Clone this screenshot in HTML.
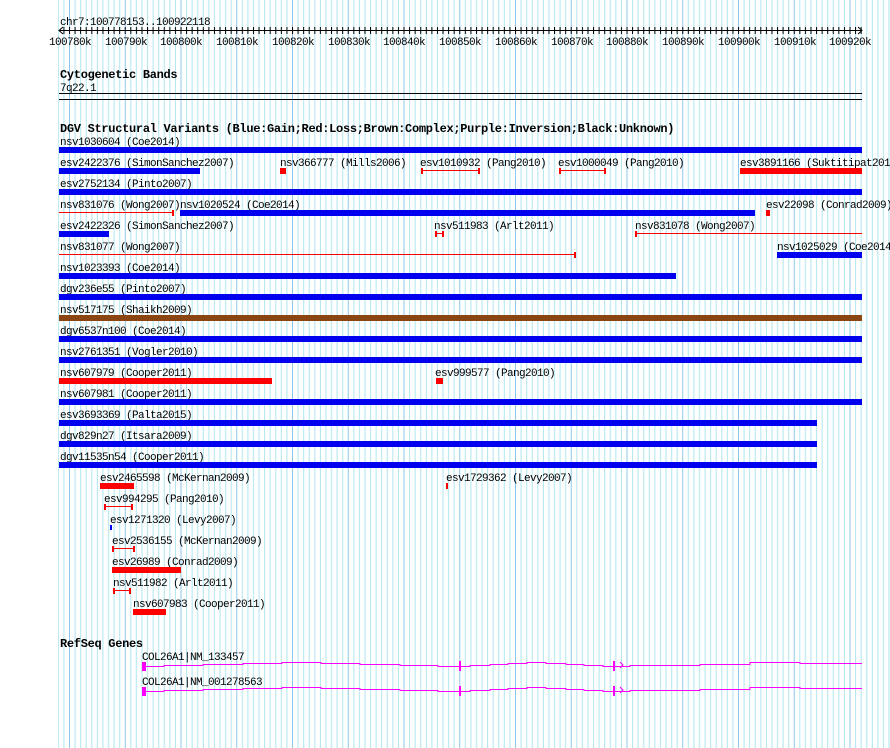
<!DOCTYPE html>
<html><head><meta charset="utf-8"><style>
html,body{margin:0;padding:0;background:#fff;width:890px;height:748px;overflow:hidden}
svg{display:block}
text{font-family:"Liberation Mono",monospace;font-size:11px;letter-spacing:-0.6px;fill:#000}
.b{font-weight:bold;font-size:12px;letter-spacing:-0.3px}
</style></head><body>
<svg width="890" height="748" xmlns="http://www.w3.org/2000/svg">
<defs>
<pattern id="g" patternUnits="userSpaceOnUse" x="69" y="0" width="55.75" height="748">
<rect x="0" y="0" width="1" height="748" fill="#8cc8ee"/>
<rect x="5.575" width="1" height="748" fill="#aee6ee"/>
<rect x="11.15" width="1" height="748" fill="#aee6ee"/>
<rect x="16.725" width="1" height="748" fill="#aee6ee"/>
<rect x="22.3" width="1" height="748" fill="#aee6ee"/>
<rect x="27.875" width="1" height="748" fill="#aee6ee"/>
<rect x="33.45" width="1" height="748" fill="#aee6ee"/>
<rect x="39.025" width="1" height="748" fill="#aee6ee"/>
<rect x="44.6" width="1" height="748" fill="#aee6ee"/>
<rect x="50.175" width="1" height="748" fill="#aee6ee"/>
</pattern>
<pattern id="t" patternUnits="userSpaceOnUse" x="69" y="0" width="5.575" height="40">
<rect x="0" y="27" width="1" height="7" fill="#000"/>
</pattern>
</defs>
<rect x="58" y="0" width="832" height="748" fill="url(#g)"/>

<text x="60" y="25">chr7:100778153..100922118</text>
<rect x="59" y="30" width="803" height="1" fill="#000"/>
<rect x="60" y="0" width="802" height="40" fill="url(#t)"/>
<path d="M63 27 L59 30.5 L63 34 M858 27 L862 30.5 L858 34" stroke="#000" fill="none"/>
<g text-anchor="middle">
<text x="70" y="45">100780k</text><text x="126" y="45">100790k</text><text x="181" y="45">100800k</text>
<text x="237" y="45">100810k</text><text x="293" y="45">100820k</text><text x="349" y="45">100830k</text>
<text x="404" y="45">100840k</text><text x="460" y="45">100850k</text><text x="516" y="45">100860k</text>
<text x="572" y="45">100870k</text><text x="627" y="45">100880k</text><text x="683" y="45">100890k</text>
<text x="739" y="45">100900k</text><text x="795" y="45">100910k</text><text x="850" y="45">100920k</text>
</g>

<text class="b" x="60" y="78">Cytogenetic Bands</text>
<text x="60" y="91">7q22.1</text>
<rect x="59" y="93" width="803" height="1" fill="#000"/>
<rect x="59" y="99" width="803" height="1" fill="#000"/>

<text class="b" x="60" y="132">DGV Structural Variants (Blue:Gain;Red:Loss;Brown:Complex;Purple:Inversion;Black:Unknown)</text>

<text x="60" y="145">nsv1030604 (Coe2014)</text>
<text x="60" y="166">esv2422376 (SimonSanchez2007)</text>
<text x="280" y="166">nsv366777 (Mills2006)</text>
<text x="420" y="166">esv1010932 (Pang2010)</text>
<text x="558" y="166">esv1000049 (Pang2010)</text>
<text x="740" y="166">esv3891166 (Suktitipat2011)</text>
<text x="60" y="187">esv2752134 (Pinto2007)</text>
<text x="60" y="208">nsv831076 (Wong2007)</text>
<text x="180" y="208">nsv1020524 (Coe2014)</text>
<text x="766" y="208">esv22098 (Conrad2009)</text>
<text x="60" y="229">esv2422326 (SimonSanchez2007)</text>
<text x="434" y="229">nsv511983 (Arlt2011)</text>
<text x="635" y="229">nsv831078 (Wong2007)</text>
<text x="60" y="250">nsv831077 (Wong2007)</text>
<text x="777" y="250">nsv1025029 (Coe2014)</text>
<text x="60" y="271">nsv1023393 (Coe2014)</text>
<text x="60" y="292">dgv236e55 (Pinto2007)</text>
<text x="60" y="313">nsv517175 (Shaikh2009)</text>
<text x="60" y="334">dgv6537n100 (Coe2014)</text>
<text x="60" y="355">nsv2761351 (Vogler2010)</text>
<text x="60" y="376">nsv607979 (Cooper2011)</text>
<text x="435" y="376">esv999577 (Pang2010)</text>
<text x="60" y="397">nsv607981 (Cooper2011)</text>
<text x="60" y="418">esv3693369 (Palta2015)</text>
<text x="60" y="439">dgv829n27 (Itsara2009)</text>
<text x="60" y="460">dgv11535n54 (Cooper2011)</text>
<text x="100" y="481">esv2465598 (McKernan2009)</text>
<text x="446" y="481">esv1729362 (Levy2007)</text>
<text x="104" y="502">esv994295 (Pang2010)</text>
<text x="110" y="523">esv1271320 (Levy2007)</text>
<text x="112" y="544">esv2536155 (McKernan2009)</text>
<text x="112" y="565">esv26989 (Conrad2009)</text>
<text x="113" y="586">nsv511982 (Arlt2011)</text>
<text x="133" y="607">nsv607983 (Cooper2011)</text>

<g fill="#0000ee">
<rect x="59" y="147" width="803" height="6"/>
<rect x="59" y="168" width="141" height="6"/>
<rect x="59" y="189" width="803" height="6"/>
<rect x="180" y="210" width="575" height="6"/>
<rect x="59" y="231" width="50" height="6"/>
<rect x="777" y="252" width="85" height="6"/>
<rect x="59" y="273" width="617" height="6"/>
<rect x="59" y="294" width="803" height="6"/>
<rect x="59" y="336" width="803" height="6"/>
<rect x="59" y="357" width="803" height="6"/>
<rect x="59" y="399" width="803" height="6"/>
<rect x="59" y="420" width="758" height="6"/>
<rect x="59" y="441" width="758" height="6"/>
<rect x="59" y="462" width="758" height="6"/>
<rect x="110" y="525" width="2" height="5"/>
</g>
<rect x="59" y="315" width="803" height="6" fill="#8b4513"/>
<g fill="#f00">
<rect x="280" y="168" width="6" height="6"/>
<rect x="740" y="168" width="122" height="6"/>
<rect x="766" y="210" width="4" height="6"/>
<rect x="59" y="378" width="213" height="6"/>
<rect x="436" y="378" width="7" height="6"/>
<rect x="100" y="483" width="34" height="6"/>
<rect x="446" y="483" width="2" height="6"/>
<rect x="112" y="567" width="69" height="6"/>
<rect x="133" y="609" width="33" height="6"/>
<rect x="421" y="170" width="58" height="1"/><rect x="421" y="168" width="2" height="6"/><rect x="478" y="168" width="2" height="6"/>
<rect x="559" y="170" width="46" height="1"/><rect x="559" y="168" width="2" height="6"/><rect x="604" y="168" width="2" height="6"/>
<rect x="59" y="212" width="114" height="1"/><rect x="172" y="210" width="2" height="6"/>
<rect x="435" y="233" width="8" height="1"/><rect x="435" y="231" width="2" height="6"/><rect x="442" y="231" width="2" height="6"/>
<rect x="635" y="233" width="227" height="1"/><rect x="635" y="231" width="2" height="6"/>
<rect x="59" y="254" width="516" height="1"/><rect x="574" y="252" width="2" height="6"/>
<rect x="104" y="506" width="28" height="1"/><rect x="104" y="504" width="2" height="6"/><rect x="131" y="504" width="2" height="6"/>
<rect x="112" y="548" width="22" height="1"/><rect x="112" y="546" width="2" height="6"/><rect x="133" y="546" width="2" height="6"/>
<rect x="113" y="590" width="17" height="1"/><rect x="113" y="588" width="2" height="6"/><rect x="129" y="588" width="2" height="6"/>
</g>

<text class="b" x="60" y="647">RefSeq Genes</text>
<text x="142" y="660">COL26A1|NM_133457</text>
<text x="142" y="685">COL26A1|NM_001278563</text>
<g fill="none" stroke="#f0f" stroke-width="1">
<path d="M145 666.5 H164 V665.5 H203 V664.5 H243 V663.5 H282 V662.5 H321 V663.5 H360 V664.5 H400 V665.5 H438 V666.5 H470 V665.5 H490 V664.5 H508 V663.5 H527 V662.5 H546 V663.5 H566 V664.5 H584 V665.5 H603 V666.5 H630 V665.5 H700 V664.5 H750 V662.5 H800 V663.5 H862"/>
<path d="M145 691.5 H164 V690.5 H203 V689.5 H243 V688.5 H282 V687.5 H321 V688.5 H360 V689.5 H400 V690.5 H438 V691.5 H470 V690.5 H490 V689.5 H508 V688.5 H527 V687.5 H546 V688.5 H566 V689.5 H584 V690.5 H603 V691.5 H630 V690.5 H700 V689.5 H750 V687.5 H800 V688.5 H862"/>
<path d="M620 662 L623 665 L620 668 M620 687 L623 690 L620 693"/>
</g>
<g fill="#f0f">
<rect x="142" y="662" width="4" height="9"/><rect x="142" y="687" width="4" height="9"/>
<rect x="459" y="661" width="2" height="10"/><rect x="459" y="686" width="2" height="10"/>
<rect x="613" y="661" width="2" height="10"/><rect x="613" y="686" width="2" height="10"/>
</g>
</svg>
</body></html>
